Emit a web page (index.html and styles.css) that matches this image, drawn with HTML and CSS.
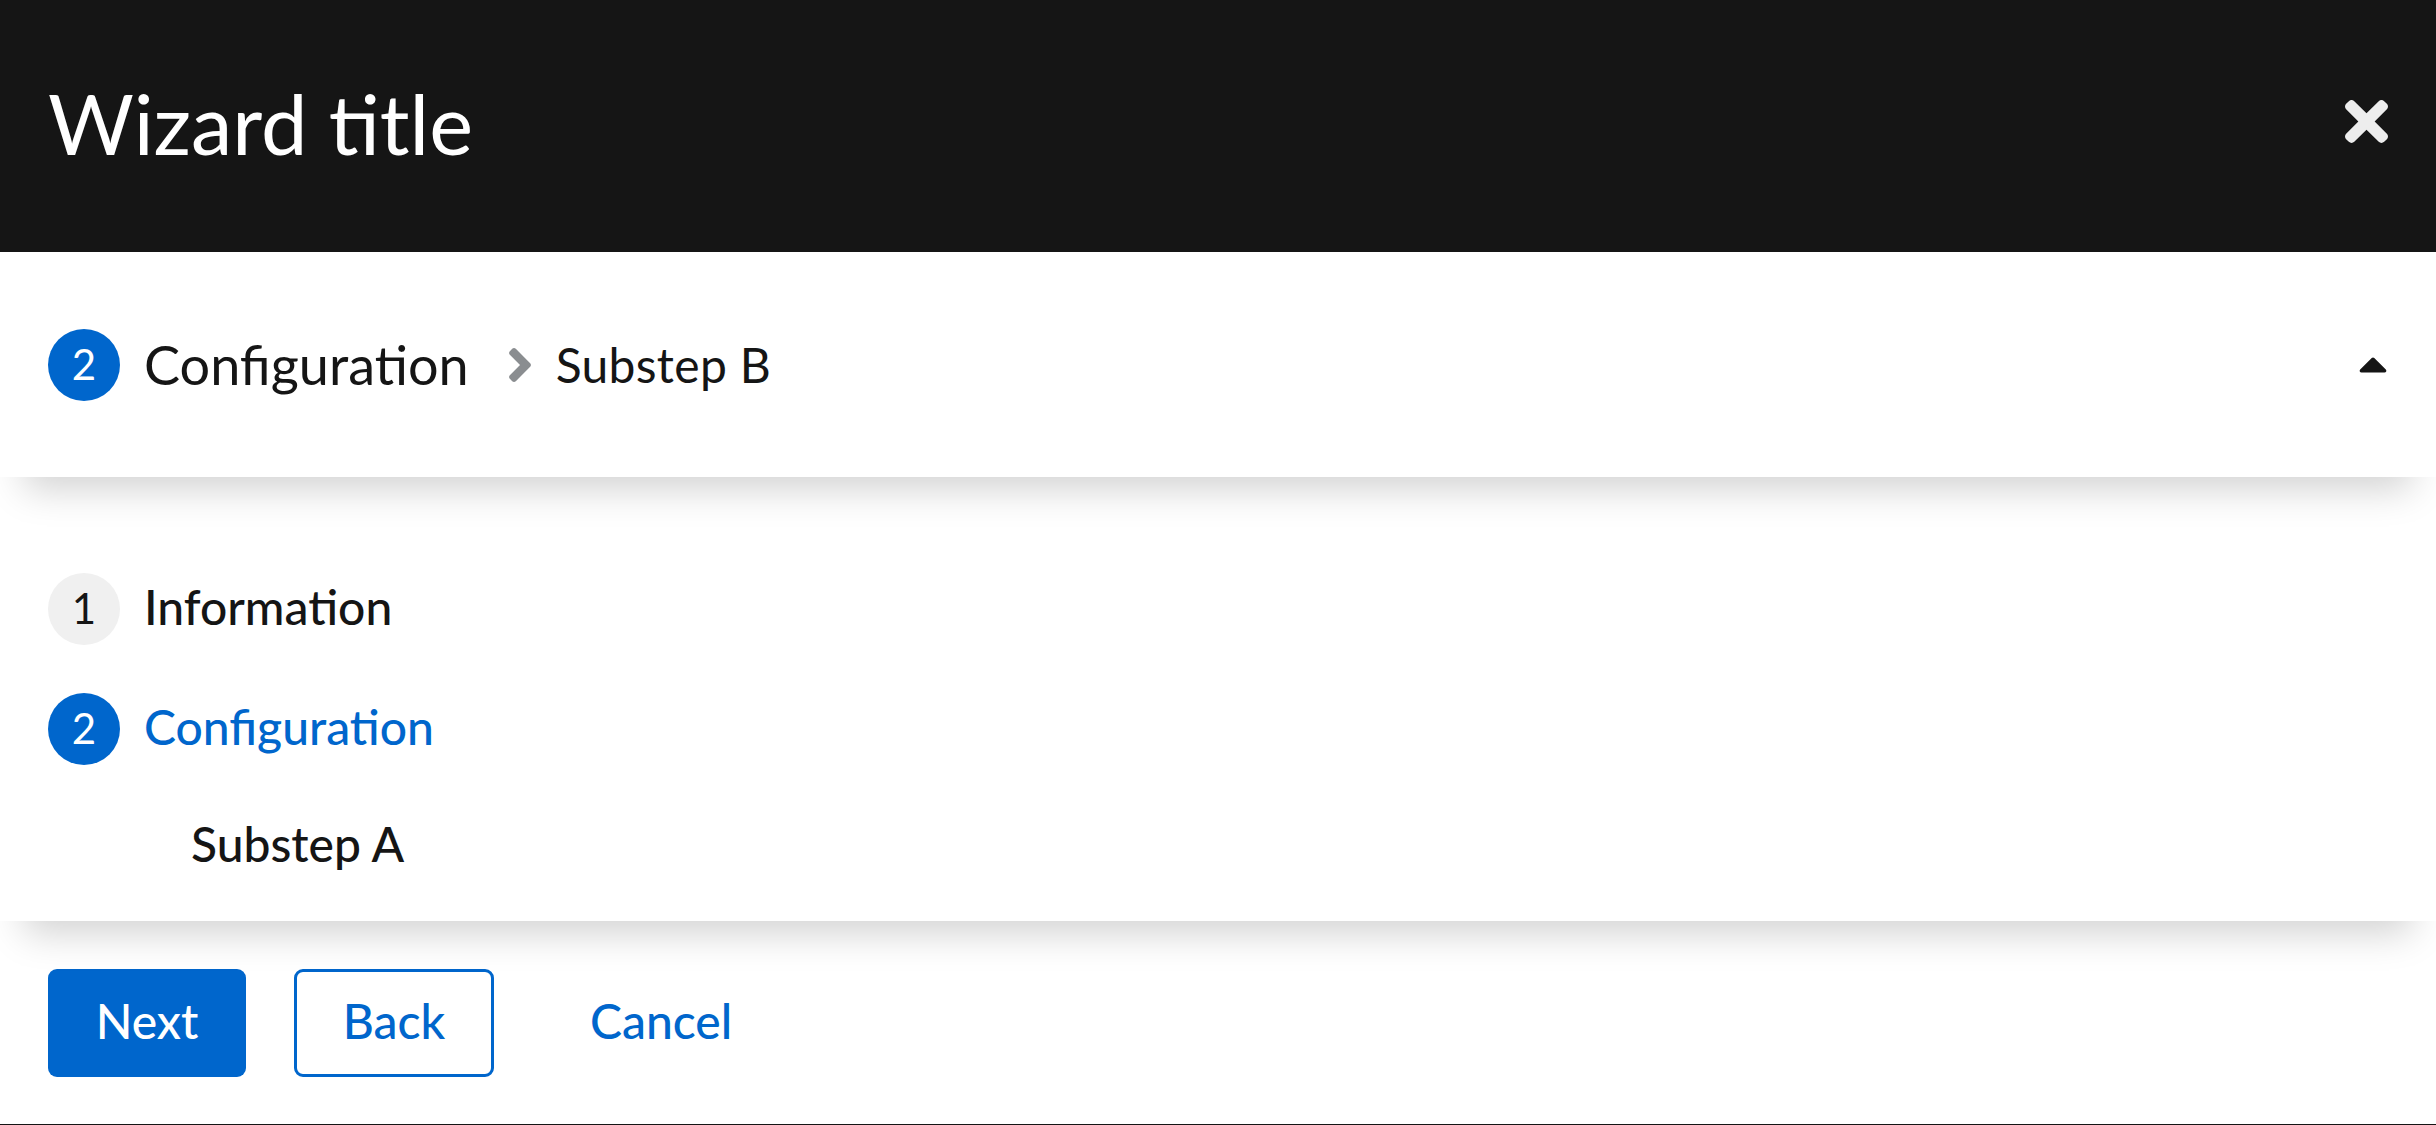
FILE: index.html
```html
<!DOCTYPE html>
<html lang="en">
<head>
<meta charset="utf-8">
<title>Wizard</title>
<link rel="stylesheet" href="styles.css">
</head>
<body>
<div class="wizard">
  <header class="wizard-header">
    <h1 class="wizard-title">Wizard title</h1>
    <button class="close-btn" aria-label="Close">
      <svg class="close-icon" viewBox="0 80 352 352" width="43" height="43"><path fill="#ededed" d="M242.72 256l100.07-100.07c12.28-12.28 12.28-32.19 0-44.48l-22.240-22.24c-12.28-12.28-32.19-12.28-44.48 0L176 189.28 75.930 89.21c-12.28-12.28-32.19-12.28-44.48 0L9.21 111.45c-12.28 12.28-12.28 32.19 0 44.48L109.28 256 9.21 356.07c-12.28 12.28-12.28 32.19 0 44.48l22.24 22.24c12.28 12.28 32.2 12.28 44.48 0L176 322.72l100.07 100.07c12.28 12.28 32.2 12.28 44.48 0l22.24-22.24c12.28-12.28 12.28-32.19 0-44.48L242.72 256z"/></svg>
    </button>
  </header>

  <button class="wizard-toggle">
    <span class="toggle-list">
      <span class="num num-current">2</span>
      <span class="toggle-step">Configuration</span>
      <svg class="toggle-sep" viewBox="24 95 208 322" width="22" height="34"><path fill="#8a8d90" d="M224.3 273l-136 136c-9.4 9.4-24.6 9.4-33.9 0l-22.6-22.6c-9.4-9.4-9.4-24.6 0-33.9l96.4-96.4-96.4-96.4c-9.4-9.4-9.4-24.6 0-33.9L54.3 103c9.4-9.4 24.6-9.4 33.9 0l136 136c9.5 9.4 9.5 24.6.1 34z"/></svg>
      <span class="toggle-sub">Substep B</span>
    </span>
    <svg class="toggle-caret" viewBox="4 183 312 169" width="28" height="16"><path fill="#151515" d="M288.662 352H31.338c-17.818 0-26.741-21.543-14.142-34.142l128.662-128.662c7.81-7.81 20.474-7.81 28.284 0l128.662 128.662c12.6 12.599 3.676 34.142-14.142 34.142z"/></svg>
  </button>

  <nav class="wizard-nav">
    <ol class="nav-list">
      <li class="nav-item"><span class="num">1</span><span class="nav-text">Information</span></li>
      <li class="nav-item"><span class="num num-current">2</span><span class="nav-text nav-text-current">Configuration</span></li>
      <li class="nav-sub"><span class="nav-sub-text">Substep A</span></li>
    </ol>
  </nav>

  <footer class="wizard-footer">
    <button class="btn btn-primary"><span class="btn-text">Next</span></button>
    <button class="btn btn-secondary"><span class="btn-text">Back</span></button>
    <button class="btn btn-link"><span class="btn-text">Cancel</span></button>
  </footer>
</div>
</body>
</html>
```

FILE: styles.css
```css
* { box-sizing: border-box; }

html, body {
  margin: 0;
  padding: 0;
  background: #ffffff;
}

body {
  font-family: Lato, "Liberation Sans", sans-serif;
  color: #151515;
}

.wizard {
  height: 1125px;
  display: flex;
  flex-direction: column;
  border-bottom: 1px solid #151515;
  overflow: hidden;
}

.wizard-header {
  height: 252px;
  flex: none;
  background: #151515;
  display: flex;
  align-items: center;
  justify-content: space-between;
  padding: 0 48px 0 48px;
}

.wizard-title {
  margin: 0 0 5px 0;
  font-size: 83px;
  font-weight: 400;
  line-height: 1;
  color: #ffffff;
}

.close-btn {
  border: 0;
  background: none;
  padding: 0;
  margin: 0 0 9px 0;
  display: flex;
}

.wizard-toggle {
  flex: none;
  height: 225px;
  width: 100%;
  display: flex;
  align-items: center;
  justify-content: space-between;
  padding: 0 49px 0 48px;
  border: 0;
  background: #ffffff;
  font: inherit;
  color: inherit;
  text-align: left;
  position: relative;
  z-index: 2;
  box-shadow: 0 36px 36px -24px rgba(3, 3, 3, 0.18);
}

.toggle-list {
  display: flex;
  align-items: center;
}

.num {
  width: 72px;
  height: 72px;
  flex: none;
  border-radius: 50%;
  background: #f0f0f0;
  color: #151515;
  display: flex;
  align-items: center;
  justify-content: center;
  font-size: 42px;
  line-height: 1;
  padding-bottom: 2px;
}

.num-current {
  background: #0066cc;
  color: #ffffff;
}

.toggle-step {
  margin: 0 0 0 24px;
  font-size: 54px;
  line-height: 1;
}

.toggle-sep {
  margin-left: 40px;
  flex: none;
}

.toggle-sub {
  margin: 0 0 0 25px;
  font-size: 48px;
  line-height: 1;
  letter-spacing: 0.3px;
}

.toggle-caret {
  flex: none;
}

.wizard-nav {
  flex: none;
  background: #ffffff;
  position: relative;
  z-index: 1;
  box-shadow: 0 36px 36px -24px rgba(3, 3, 3, 0.18);
  padding: 96px 48px 39px 48px;
}

.nav-list {
  list-style: none;
  margin: 0;
  padding: 0;
  display: flex;
  flex-direction: column;
  gap: 48px;
}

.nav-item {
  display: flex;
  align-items: center;
  height: 72px;
}

.nav-text {
  margin: 0 0 4px 24px;
  font-size: 48px;
  font-weight: 500;
  line-height: 1;
}

.nav-text-current {
  color: #0066cc;
}

.nav-sub {
  height: 72px;
  display: flex;
  align-items: center;
  margin-top: -3px;
  padding-left: 143px;
}

.nav-sub-text {
  margin-bottom: 4px;
  font-size: 48px;
  font-weight: 500;
  line-height: 1;
}

.wizard-footer {
  flex: 1;
  display: flex;
  align-items: flex-start;
  gap: 48px;
  padding: 48px 48px 0 48px;
}

.btn {
  height: 108px;
  padding: 0 48px;
  font-family: inherit;
  font-size: 48px;
  font-weight: 500;
  line-height: 1;
  border-radius: 9px;
  border: 0;
  background: none;
  display: flex;
  align-items: center;
}

.btn-text {
  margin-bottom: 4px;
}

.btn-primary {
  width: 198px;
  justify-content: center;
  background: #0066cc;
  color: #ffffff;
}

.btn-secondary {
  width: 200px;
  justify-content: center;
  color: #0066cc;
  border: 3px solid #0066cc;
}

.btn-link {
  color: #0066cc;
}
```
